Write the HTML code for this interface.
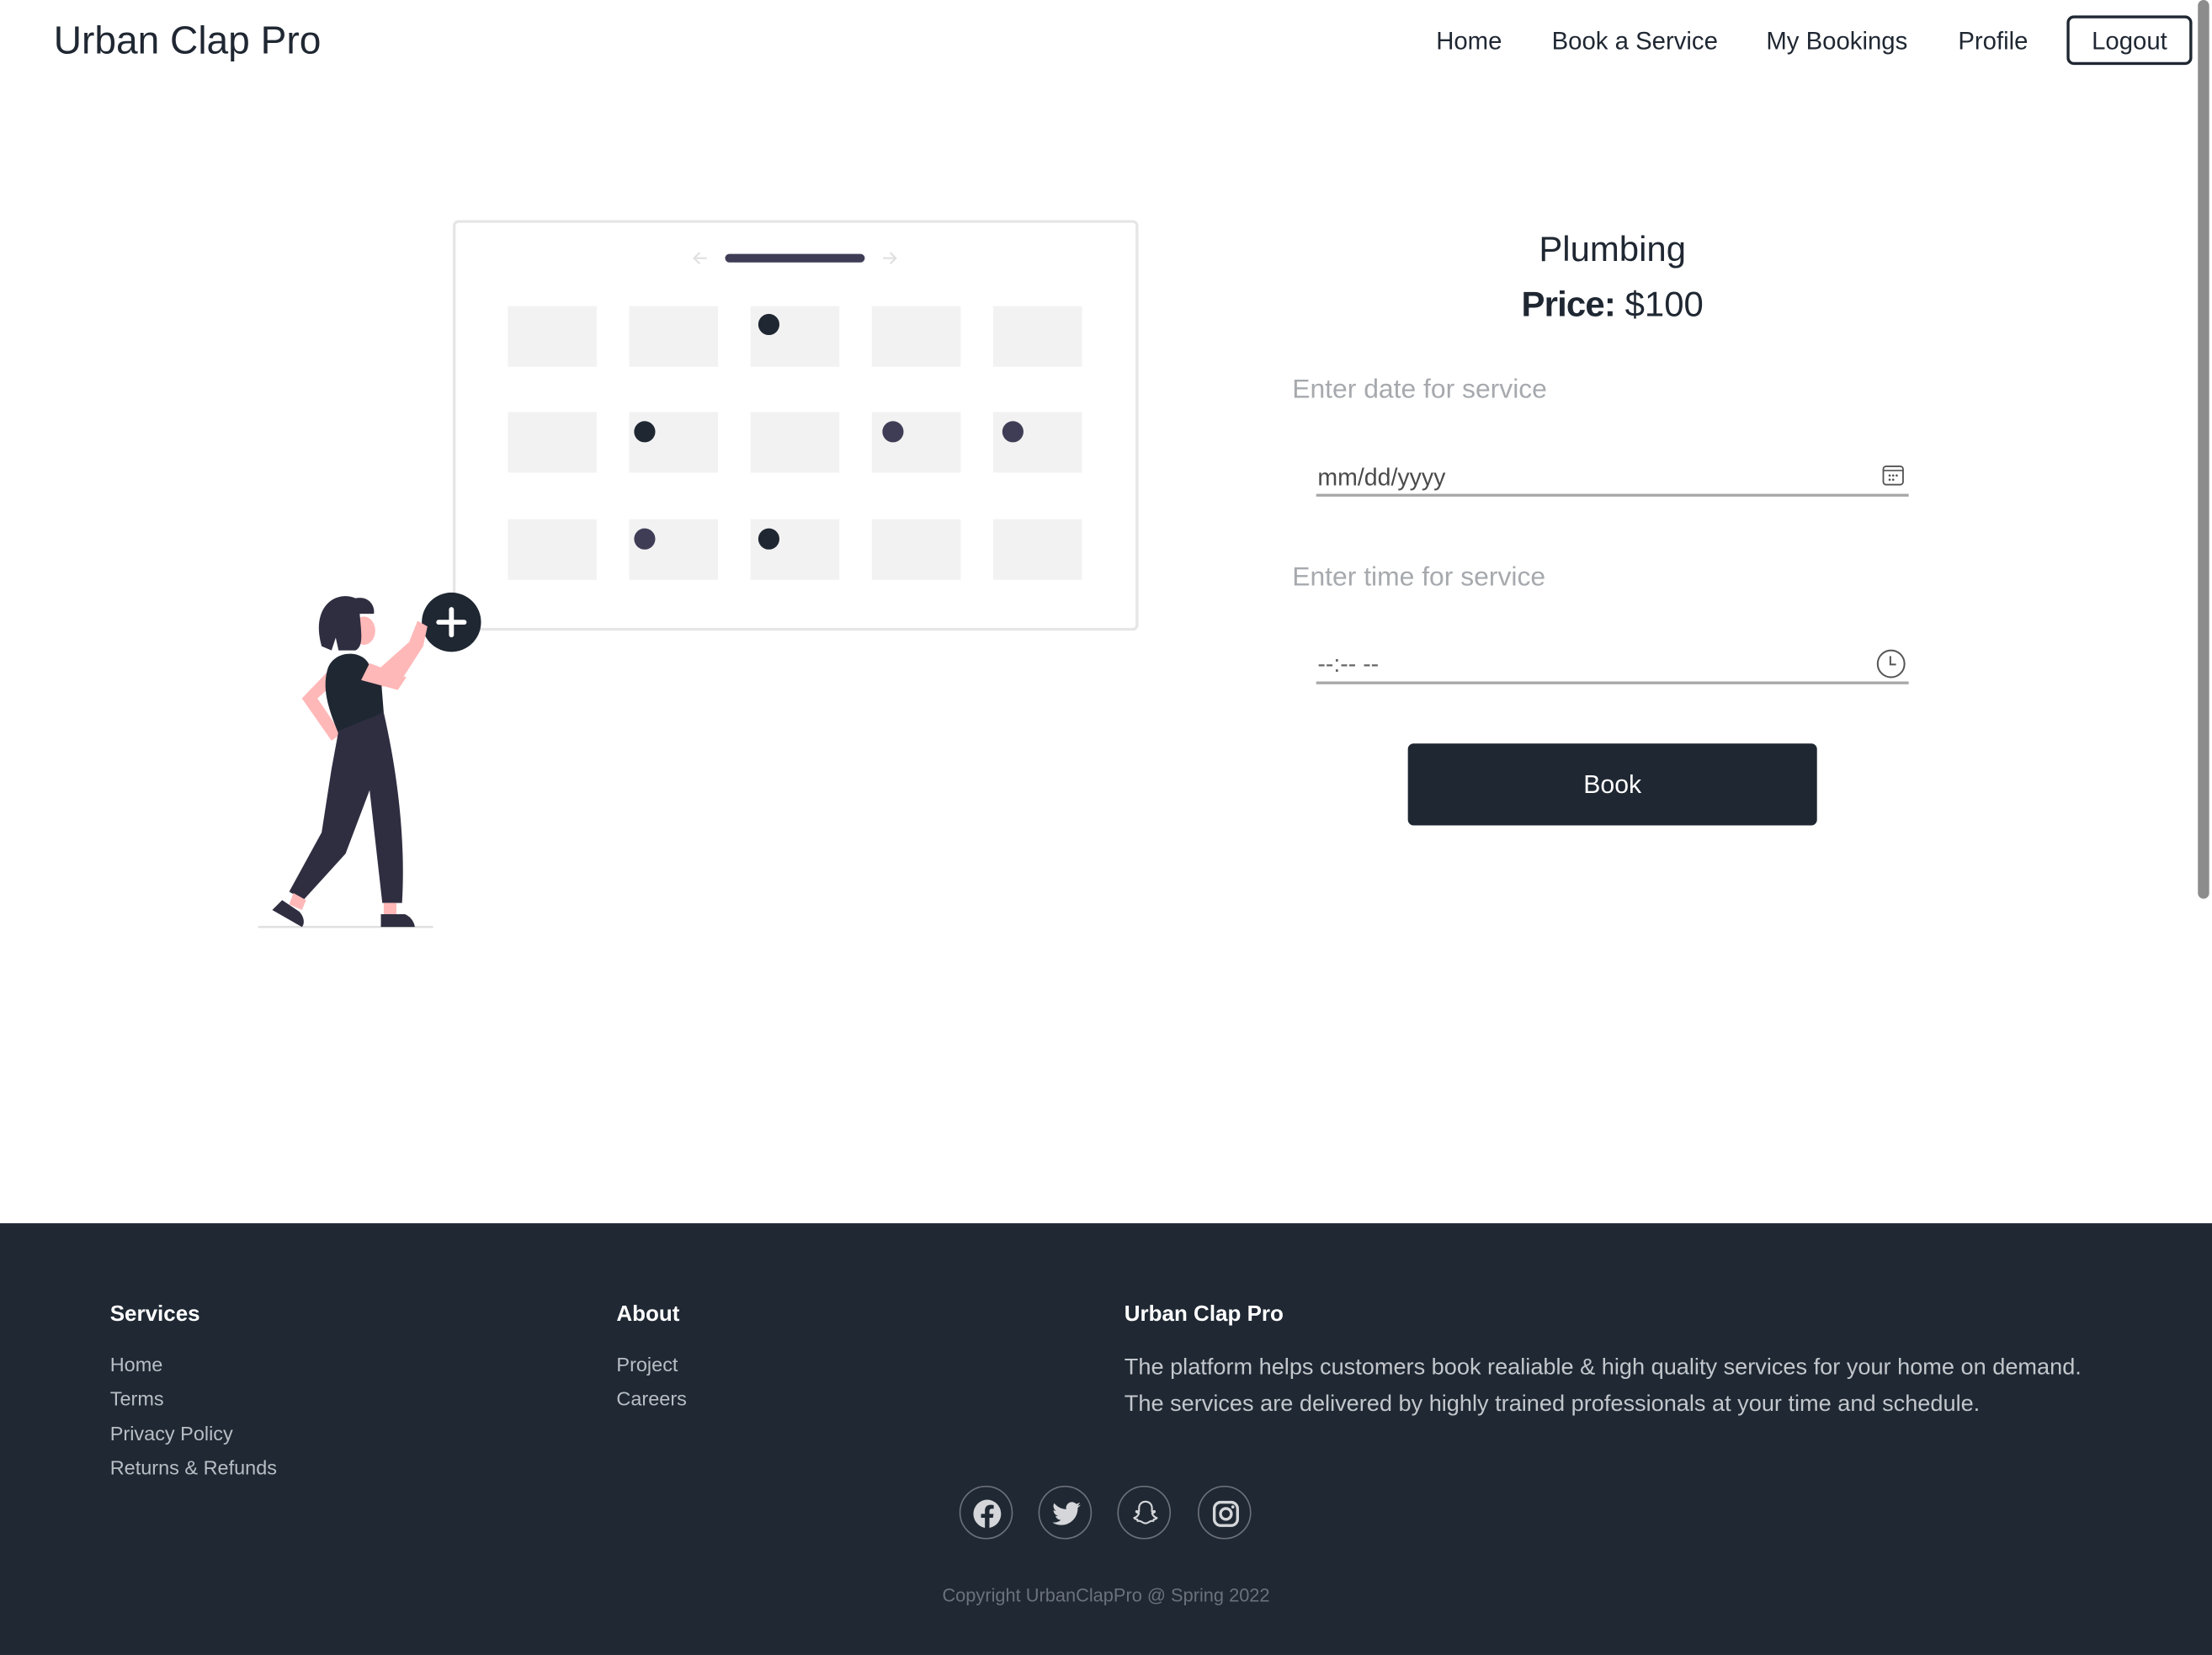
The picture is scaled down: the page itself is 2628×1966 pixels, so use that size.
<!DOCTYPE html>
<html><head><meta charset="utf-8"><style>
html,body{margin:0;padding:0;background:#fff;overflow:hidden}
body{width:2628px;height:1966px;position:relative}
#w{position:absolute;left:0;top:0;width:1568px;height:1173px;transform:scale(1.67602);transform-origin:0 0;font-family:"Liberation Sans",Arial,sans-serif;color:#1f2732}
.a{position:absolute;white-space:nowrap}
.nav{font-size:17.5px;color:#1f2732;top:19px}
.foot{position:absolute;left:0;top:867px;width:1568px;height:306px;background:#1f2833}
.fh{position:absolute;color:#fff;font-size:15.5px;font-weight:bold;top:923px}
.fl{position:absolute;color:#b9bec5;font-size:14px}
.sc{position:absolute;top:1053px;width:38px;height:38px;border:1.5px solid #6b7079;border-radius:50%;box-sizing:border-box}
.sc svg{position:absolute;left:8px;top:8px}
</style></head><body><div id="w">
<div class="a" style="left:38px;top:13px;font-size:27.5px;color:#1f2732">Urban Clap Pro</div>
<div class="a nav" style="left:1018px">Home</div>
<div class="a nav" style="left:1100px">Book a Service</div>
<div class="a nav" style="left:1252px">My Bookings</div>
<div class="a nav" style="left:1388px">Profile</div>
<div class="a" style="left:1465px;top:11px;width:89px;height:35px;border:2px solid #1f2732;border-radius:5px;box-sizing:border-box;font-size:17.5px;text-align:center;line-height:32px">Logout</div>
<div class="a" style="left:1558px;top:0;width:8px;height:637px;background:#8c8c8c;border-radius:4px"></div>

<svg class="a" style="left:0;top:0" width="900" height="700" viewBox="0 0 900 700">
<rect x="322" y="157" width="484" height="289" rx="3" fill="#fff" stroke="#e6e6e6" stroke-width="2"/>
<rect x="514" y="180" width="99" height="6" rx="3" fill="#3f3d56"/>
<path d="M501 183h-9m4-4l-4 4 4 4M626 183h9m-4-4l4 4-4 4" stroke="#e0e0e0" stroke-width="1.3" fill="none"/>
<g fill="#f2f2f2">
<rect x="360" y="217" width="63" height="43"/><rect x="446" y="217" width="63" height="43"/><rect x="532" y="217" width="63" height="43"/><rect x="618" y="217" width="63" height="43"/><rect x="704" y="217" width="63" height="43"/>
<rect x="360" y="292" width="63" height="43"/><rect x="446" y="292" width="63" height="43"/><rect x="532" y="292" width="63" height="43"/><rect x="618" y="292" width="63" height="43"/><rect x="704" y="292" width="63" height="43"/>
<rect x="360" y="368" width="63" height="43"/><rect x="446" y="368" width="63" height="43"/><rect x="532" y="368" width="63" height="43"/><rect x="618" y="368" width="63" height="43"/><rect x="704" y="368" width="63" height="43"/>
</g>
<circle cx="545" cy="230" r="7.5" fill="#1f2732"/><circle cx="457" cy="306" r="7.5" fill="#1f2732"/><circle cx="633" cy="306" r="7.5" fill="#3f3d56"/><circle cx="718" cy="306" r="7.5" fill="#3f3d56"/><circle cx="457" cy="382" r="7.5" fill="#3f3d56"/><circle cx="545" cy="382" r="7.5" fill="#1f2732"/>
<line x1="183" y1="657" x2="307" y2="657" stroke="#e0e0e0" stroke-width="1.5"/>
<circle cx="320" cy="441" r="21" fill="#1f2732"/>
<path d="M320 432v18M311 441h18" stroke="#fff" stroke-width="3.5" stroke-linecap="round"/>
<path d="M262 480 L290 455 L296 440 L303 444 L300 458 L282 486 L258 487Z" fill="#ffb8b8"/>
<path d="M238 470 L214 495 L235 525 L242 520 L225 495 L244 478Z" fill="#ffb8b8"/>
<ellipse cx="258" cy="447" rx="8" ry="10" fill="#ffb8b8"/>
<path d="M228 458 C220 430 238 418 252 424 C262 422 266 430 265 435 L255 435 C256 448 258 458 252 461 L240 461 L238 452 L235 461 Z" fill="#2f2e41"/>
<path d="M232 475 C236 460 258 460 262 472 L270 480 L272 505 L240 520 C234 505 228 490 232 475Z" fill="#1f2732"/>
<path d="M262 470 L288 480 L282 489 L256 482Z" fill="#ffb8b8"/>
<path d="M240 518 L272 505 C280 540 288 590 285 640 L271 640 L262 560 L245 605 L215 638 L205 632 L228 590 L235 545Z" fill="#2f2e41"/>
<path d="M208 633 L217 638 L214 645 L205 641Z" fill="#ffb8b8"/>
<path d="M272 640 L281 640 L281 648 L272 648Z" fill="#ffb8b8"/>
<path d="M200 638 L212 646 C216 650 216 655 214 657 L193 645Z" fill="#2f2e41"/>
<path d="M270 648 L287 648 C292 650 294 655 294 657 L270 657Z" fill="#2f2e41"/>
</svg>

<div class="a" style="left:998px;top:163px;width:290px;text-align:center;font-size:25px;color:#1f2732">Plumbing</div>
<div class="a" style="left:998px;top:202px;width:290px;text-align:center;font-size:25px;color:#1f2732"><span style="font-weight:600;letter-spacing:-0.5px">Price:</span> $100</div>
<div class="a" style="left:916px;top:266px;font-size:19px;color:#a6a9ad">Enter date for service</div>
<div class="a" style="left:934px;top:329px;font-size:17px;color:#4a4a4a">mm/dd/yyyy</div>
<div class="a" style="left:933px;top:350px;width:420px;height:1.5px;background:#a9a9a9"></div>
<svg class="a" style="left:1334px;top:329px" width="16" height="16" viewBox="0 0 16 16"><rect x="1" y="1.5" width="14" height="13" rx="2" fill="none" stroke="#555" stroke-width="1.1"/><line x1="1" y1="4.5" x2="15" y2="4.5" stroke="#555" stroke-width="1"/><g fill="#555"><circle cx="5.5" cy="8" r=".8"/><circle cx="8" cy="8" r=".8"/><circle cx="10.5" cy="8" r=".8"/><circle cx="5.5" cy="11" r=".8"/><circle cx="8" cy="11" r=".8"/></g></svg>
<div class="a" style="left:916px;top:399px;font-size:19px;color:#a6a9ad">Enter time for service</div>
<div class="a" style="left:934px;top:461px;font-size:17px;color:#666">--:-- --</div>
<div class="a" style="left:933px;top:483px;width:420px;height:1.5px;background:#a9a9a9"></div>
<svg class="a" style="left:1330px;top:460px" width="21" height="21" viewBox="0 0 21 21"><circle cx="10.5" cy="10.5" r="9.5" fill="none" stroke="#555" stroke-width="1.2"/><path d="M10 5v6h4" fill="none" stroke="#555" stroke-width="1.2"/></svg>
<div class="a" style="left:998px;top:527px;width:290px;height:58px;background:#1f2732;border-radius:4px;color:#fff;font-size:18px;text-align:center;line-height:59px">Book</div>

<div class="foot"></div>
<div class="fh" style="left:78px">Services</div>
<div class="fh" style="left:437px">About</div>
<div class="fh" style="left:797px">Urban Clap Pro</div>
<div class="fl" style="left:78px;top:959px">Home</div>
<div class="fl" style="left:78px;top:983px">Terms</div>
<div class="fl" style="left:78px;top:1008px">Privacy Policy</div>
<div class="fl" style="left:78px;top:1032px">Returns &amp; Refunds</div>
<div class="fl" style="left:437px;top:959px">Project</div>
<div class="fl" style="left:437px;top:983px">Careers</div>
<div class="fl" style="left:797px;top:956px;font-size:16.2px;line-height:26px;color:#c3c7cc;white-space:nowrap">The platform helps customers book realiable &amp; high quality services for your home on demand.<br>The services are delivered by highly trained professionals at your time and schedule.</div>

<div class="sc" style="left:680px"><svg width="22" height="22" viewBox="0 0 24 24"><path d="M12 1a11 11 0 0 0-2 21.8V15H7v-3h3V9.5C10 6.6 11.7 5 14.3 5c1.2 0 2.5.2 2.5.2v2.8h-1.4c-1.4 0-1.900.9-1.9 1.8V12h3.2l-.5 3h-2.7v7.8A11 11 0 0 0 12 1z" fill="#d4d6d9"/></svg></div>
<div class="sc" style="left:736px"><svg width="22" height="22" viewBox="0 0 24 24"><path d="M23 5c-.8.4-1.7.6-2.6.7.9-.6 1.6-1.4 2-2.5-.9.5-1.9.9-2.9 1.1A4.5 4.5 0 0 0 11.8 8.4 12.8 12.8 0 0 1 2.5 3.7a4.5 4.5 0 0 0 1.4 6c-.7 0-1.4-.2-2-.6 0 2.2 1.5 4 3.6 4.4-.7.2-1.4.2-2 .1.6 1.800 2.2 3.1 4.2 3.1A9 9 0 0 1 1 18.6 12.8 12.8 0 0 0 20.7 7.8V7.2c.9-.6 1.7-1.4 2.3-2.2z" fill="#d4d6d9"/></svg></div>
<div class="sc" style="left:792px"><svg width="22" height="22" viewBox="0 0 24 24"><path d="M12 2.5c3 0 5 2.2 5 5v2.7l1.7-.4c.6 0 .7.6.2.9l-1.8.9c.6 1.8 2 3 3.7 3.5-.3.8-1.5 1-2.4 1.2l-.3 1.2c-1-.2-2.2-.1-3.1.6-.9.6-1.8 1.2-3 1.2s-2.1-.6-3-1.2c-.9-.7-2.1-.8-3.1-.6l-.3-1.2c-.9-.2-2.1-.4-2.4-1.2 1.7-.5 3.1-1.7 3.7-3.5l-1.8-.9c-.5-.3-.4-.9.2-.9l1.7.4V7.5c0-2.8 2-5 5-5z" fill="none" stroke="#d4d6d9" stroke-width="1.4" stroke-linejoin="round"/></svg></div>
<div class="sc" style="left:849px"><svg width="22" height="22" viewBox="0 0 24 24"><rect x="3" y="3" width="18" height="18" rx="5" fill="none" stroke="#d4d6d9" stroke-width="2.2"/><circle cx="12" cy="12" r="4.2" fill="none" stroke="#d4d6d9" stroke-width="2.2"/><circle cx="17.4" cy="6.6" r="1.2" fill="#d4d6d9"/></svg></div>
<div class="a" style="left:584px;top:1123px;width:400px;text-align:center;font-size:13px;color:#6b727c">Copyright UrbanClapPro @ Spring 2022</div>
</div></body></html>
